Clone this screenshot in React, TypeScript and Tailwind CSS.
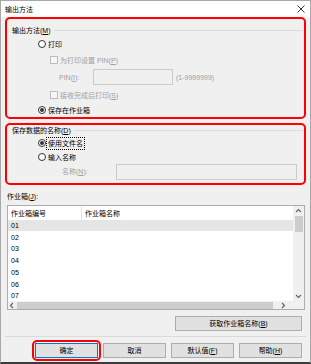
import React from 'react';

const Radio: React.FC<{ checked?: boolean }> = ({ checked }) => (
  <span className="w-[8px] h-[8px] rounded-full border border-[#333333] bg-white flex items-center justify-center shrink-0">
    {checked && <span className="w-[4px] h-[4px] rounded-full bg-[#333333]" />}
  </span>
);

const Check: React.FC = () => (
  <span className="w-[8px] h-[8px] border border-[#bcbcbc] bg-[#f7f7f7] shrink-0" />
);

const Key: React.FC<{ k: string }> = ({ k }) => <span className="underline underline-offset-1">{k}</span>;

const Chevron: React.FC<{ dir: 'up' | 'down' | 'left' | 'right' }> = ({ dir }) => {
  const d = {
    up: 'M1 4 L3.5 1.5 L6 4',
    down: 'M1 2 L3.5 4.5 L6 2',
    left: 'M4 1 L1.5 3.5 L4 6',
    right: 'M2 1 L4.5 3.5 L2 6',
  }[dir];
  return (
    <svg width="7" height="7" viewBox="0 0 7 7">
      <path d={d} fill="none" stroke="#606060" strokeWidth="1.1" />
    </svg>
  );
};

const Btn: React.FC<{ children: React.ReactNode; wide?: boolean; primary?: boolean }> = ({ children, wide, primary }) => (
  <div
    className={`${wide ? 'w-[127px]' : 'w-[63px]'} h-[15px] flex items-center justify-center bg-[#e1e1e1] border ${
      primary ? 'border-[#0078d7]' : 'border-[#adadad]'
    } text-[7px] leading-none text-black`}
  >
    {children}
  </div>
);

const rows = ['01', '02', '03', '04', '05', '06', '07'];

export default function App() {
  return (
    <div className="w-[311px] h-[364px] flex flex-col bg-[#f0f0f0] border-x border-t border-[#a8a8a8] border-b-2 border-b-[#3a3a3a] overflow-hidden font-['Liberation_Sans','Noto_Sans_CJK_SC',sans-serif] text-[7px] leading-none text-black">
      {/* title bar */}
      <div className="h-[16px] bg-white flex items-center justify-between pl-[4px] pr-[5px] shrink-0">
        <span>输出方法</span>
        <svg width="8" height="8" viewBox="0 0 8 8">
          <path d="M0.5 0.5 L7.5 7.5 M7.5 0.5 L0.5 7.5" stroke="#333333" strokeWidth="1" />
        </svg>
      </div>

      <div className="flex flex-col px-[4px]">
        {/* output method */}
        <div className="h-[102px] border-2 border-[#ff0000] rounded-[5px] flex flex-col pt-[5px] pb-[1px]">
          <div className="h-[12px] flex items-center pl-[5px] pr-[1px] gap-[3px]">
            <span>输出方法(<Key k="M" />)</span>
            <span className="flex-1 h-px bg-[#dcdcdc]" />
          </div>
          <div className="h-[16px] flex items-center pl-[31px] gap-[2px]">
            <Radio />
            <span>打印</span>
          </div>
          <div className="h-[16px] flex items-center pl-[43px] gap-[2px] text-[#a0a0a0]">
            <Check />
            <span>为打印设置 PIN(<Key k="P" />)</span>
          </div>
          <div className="h-[18px] flex items-center pl-[52px] text-[#a0a0a0]">
            <span className="w-[34px]">PIN(<Key k="I" />):</span>
            <span className="w-[80px] h-[16px] border border-[#cccccc] bg-[#f0f0f0]" />
            <span className="ml-[3px]">(1-9999999)</span>
          </div>
          <div className="h-[18px] flex items-center pl-[43px] gap-[2px] text-[#a0a0a0]">
            <Check />
            <span>接收完成后打印(<Key k="S" />)</span>
          </div>
          <div className="h-[12px] flex items-center pl-[31px] gap-[2px]">
            <Radio checked />
            <span>保存在作业箱</span>
          </div>
        </div>

        {/* data name */}
        <div className="mt-[4px] h-[62px] border-2 border-[#ff0000] rounded-[5px] flex flex-col pb-[3px]">
          <div className="h-[10px] flex items-center pl-[5px] pr-[1px] gap-[3px]">
            <span>保存数据的名称(<Key k="D" />)</span>
            <span className="flex-1 h-px bg-[#dcdcdc]" />
          </div>
          <div className="h-[16px] flex items-center pl-[31px] gap-[1px]">
            <Radio checked />
            <span className="outline outline-1 outline-dotted outline-black px-[1px] py-[2px]">使用文件名</span>
          </div>
          <div className="h-[12px] flex items-center pl-[31px] gap-[2px]">
            <Radio />
            <span>输入名称</span>
          </div>
          <div className="h-[17px] flex items-center pl-[55px] text-[#a0a0a0]">
            <span className="w-[54px]">名称(<Key k="N" />):</span>
            <span className="w-[181px] h-[16px] border border-[#cccccc] bg-[#f0f0f0]" />
          </div>
        </div>

        {/* box list */}
        <div className="mt-[4px] h-[14px] flex items-center pl-[2px]">
          <span>作业箱(<Key k="J" />):</span>
        </div>
        <div className="mt-[2px] ml-[2px] w-[298px] h-[105px] border border-[#adadad] bg-white flex flex-col">
          <div className="h-[95px] flex">
            <div className="flex-1 flex flex-col">
              <div className="h-[14px] flex items-stretch shrink-0">
                <div className="w-[74px] flex items-center pl-[3px] border-r border-[#e5e5e5]">作业箱编号</div>
                <div className="flex items-center pl-[3px]">作业箱名称</div>
              </div>
              <div className="flex-1 overflow-hidden -mt-[0.5px]">
                {rows.map((r, i) => (
                  <div
                    key={r}
                    className={`h-[11.75px] flex items-center pl-[3px] ${i === 0 ? 'bg-[#e5e5e5]' : ''}`}
                  >
                    {r}
                  </div>
                ))}
              </div>
            </div>
            <div className="w-[11px] bg-[#f0f0f0] flex flex-col items-center">
              <div className="h-[10px] flex items-center justify-center">
                <Chevron dir="up" />
              </div>
              <div className="w-[8px] h-[16px] bg-[#cdcdcd]" />
              <div className="flex-1" />
              <div className="h-[10px] flex items-center justify-center">
                <Chevron dir="down" />
              </div>
            </div>
          </div>
          <div className="h-[8px] flex bg-[#f0f0f0]">
            <div className="w-[9px] flex items-center justify-center">
              <Chevron dir="left" />
            </div>
            <div className="w-[256px] h-[7px] self-center bg-[#cdcdcd]" />
            <div className="flex-1 flex items-center justify-center">
              <Chevron dir="right" />
            </div>
            <div className="w-[11px]" />
          </div>
        </div>

        <div className="mt-[6px] flex justify-end pr-[4px]">
          <Btn wide>
            获取作业箱名称(<Key k="B" />)
          </Btn>
        </div>

        <div className="mt-[5px] h-px bg-[#dadada]" />

        <div className="mt-[3px] h-[21px] flex items-center justify-end pr-[4px] gap-[5px]">
          <div className="border-2 border-[#ff0000] rounded-[5px] p-[1px] mr-[-3px]">
            <Btn primary>确定</Btn>
          </div>
          <Btn>取消</Btn>
          <Btn>
            默认值(<Key k="F" />)
          </Btn>
          <Btn>
            帮助(<Key k="H" />)
          </Btn>
        </div>
      </div>
    </div>
  );
}
